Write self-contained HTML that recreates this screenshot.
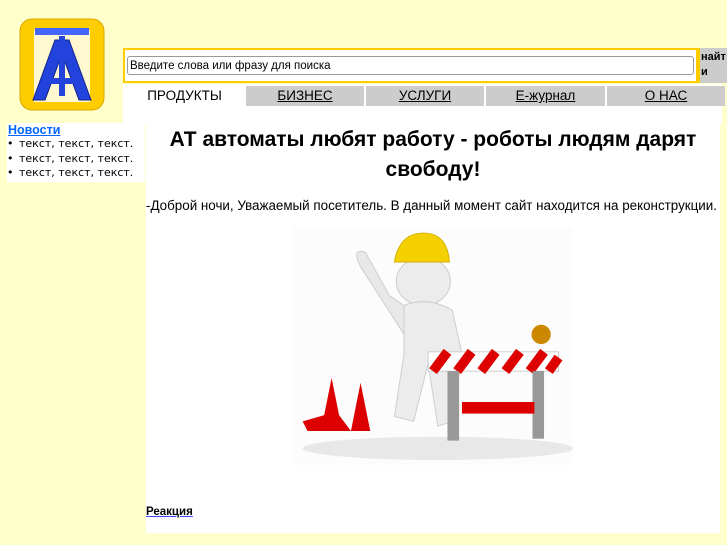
<!DOCTYPE html>
<html><head><meta charset="utf-8"><style>
body{margin:0;background:#ffffcc;width:727px;height:545px;position:relative;overflow:hidden;font-family:"Liberation Sans",sans-serif;}
.a{position:absolute}
.tab{position:absolute;top:86px;height:20px;background:#cccccc;font-size:13.5px;text-align:center;line-height:20px;color:#000;text-decoration:underline}
</style></head><body>
<svg class="a" style="left:19px;top:18px" width="86" height="93" viewBox="0 0 86 93">
<rect x="1" y="1" width="84" height="91" rx="12" fill="#ffcc00" stroke="#d9a800"/>
<rect x="15" y="12" width="56" height="72" fill="#fff8d0"/>
<rect x="16" y="10" width="54" height="7" fill="#4466ff"/>
<polygon points="36,22 50,22 72,82 60,82 43,36 26,82 14,82" fill="#2244dd" stroke="#112288"/>
<rect x="40" y="18" width="6" height="60" fill="#2244dd"/>
<rect x="24" y="60" width="38" height="6" fill="#2244dd"/>
</svg>
<div class="a" style="left:123px;top:48px;width:575px;height:35px;background:#fff;border:2px solid #ffcc00;box-sizing:border-box"></div>
<div class="a" style="left:127px;top:56px;width:567px;height:19px;border:1px solid #999;border-radius:3px;background:#fff;font-size:11.5px;line-height:18px;padding-left:2px;box-sizing:border-box">Введите слова или фразу для поиска</div>
<div class="a" style="left:698px;top:48px;width:29px;height:35px;background:#cccccc;border-left:2px solid #ffcc00;box-sizing:border-box;font-size:11px;font-weight:bold;line-height:15px;padding:2px 0 0 1px;word-break:break-all">найти</div>
<div class="a" style="left:123px;top:84px;width:599px;height:40px;background:#fff"></div>
<div class="a" style="left:146px;top:120px;width:574px;height:413px;background:#fff"></div>
<div class="tab" style="left:124px;width:121px;background:#fff;text-decoration:none">ПРОДУКТЫ</div>
<div class="tab" style="left:246px;width:118px">БИЗНЕС</div>
<div class="tab" style="left:366px;width:118px">УСЛУГИ</div>
<div class="tab" style="left:486px;width:119px">Е-журнал</div>
<div class="tab" style="left:607px;width:118px">О НАС</div>
<div class="a" style="left:7px;top:123px;width:138px;height:59px;background:#fff;font-family:'DejaVu Sans',sans-serif;font-size:11px;line-height:14.3px">
<div style="color:#0066ff;text-decoration:underline;font-weight:bold;padding-left:1px;font-family:'Liberation Sans',sans-serif;font-size:12.5px">Новости</div>
<div><span style="display:inline-block;width:12px">•</span>текст, текст, текст.</div><div><span style="display:inline-block;width:12px">•</span>текст, текст, текст.</div><div><span style="display:inline-block;width:12px">•</span>текст, текст, текст.</div></div>
<div class="a" style="left:146px;top:125px;width:574px;text-align:center;font-family:'Liberation Sans',sans-serif;font-weight:bold;font-size:21px;line-height:30px">АТ автоматы любят работу - роботы людям дарят свободу!</div>
<div class="a" style="left:146px;top:198px;font-size:13.4px;white-space:nowrap">-Доброй ночи, Уважаемый посетитель. В данный момент сайт находится на реконструкции.</div>
<svg class="a" style="left:293px;top:228px" width="280" height="237" viewBox="0 0 290 245">
<rect x="0" y="0" width="290" height="245" fill="#fcfcfc"/>
<ellipse cx="150" cy="228" rx="140" ry="12" fill="#e8e8e8"/>
<path d="M70,40 Q60,20 75,25 L100,70 L130,90 L115,110 Z" fill="#e8e8e8" stroke="#ccc"/>
<ellipse cx="135" cy="55" rx="28" ry="25" fill="#ececec" stroke="#ccc"/>
<path d="M105,35 Q110,5 135,5 Q160,5 162,35 Z" fill="#f5d000" stroke="#d4b000"/>
<path d="M115,80 Q140,70 165,85 L175,130 L165,200 L150,205 L140,140 L125,200 L105,195 L115,130 Z" fill="#ececec" stroke="#ccc"/>
<rect x="140" y="128" width="135" height="20" fill="#fff" stroke="#ccc"/>
<path d="M145,148 L160,128 M170,148 L185,128 M195,148 L210,128 M220,148 L235,128 M245,148 L260,128 M265,148 L275,134" stroke="#d00" stroke-width="10"/>
<rect x="160" y="148" width="12" height="72" fill="#999"/>
<rect x="248" y="148" width="12" height="70" fill="#999"/>
<rect x="175" y="180" width="75" height="12" fill="#d00"/>
<circle cx="257" cy="110" r="10" fill="#c80"/>
<polygon points="40,155 30,205 50,205" fill="#d00"/>
<polygon points="70,160 60,210 80,210" fill="#d00"/>
<polygon points="10,200 45,190 60,210 15,210" fill="#d00"/>
</svg>
<div class="a" style="left:146px;top:506px;font-size:11.5px;font-weight:bold;text-decoration:underline;text-decoration-color:#44f">Реакция</div>
</body></html>
